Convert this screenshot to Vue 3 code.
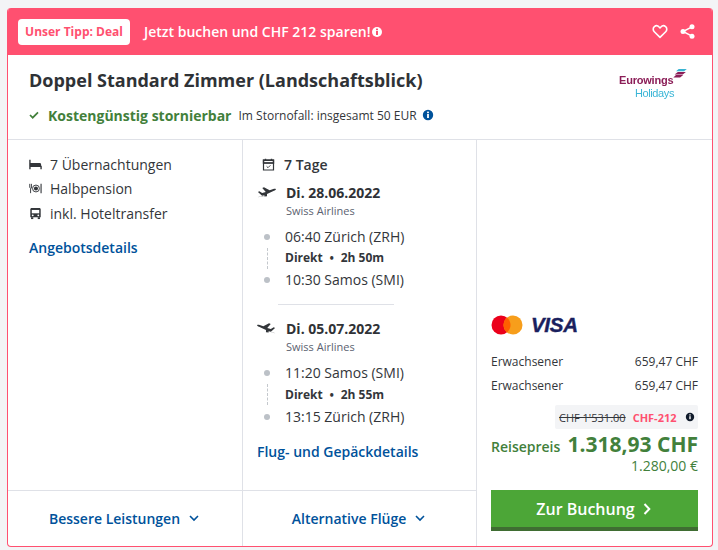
<script setup>
const legs = [
  { date: 'Di. 28.06.2022', from: '06:40 Zürich (ZRH)', dur: '2h 50m', to: '10:30 Samos (SMI)', back: false },
  { date: 'Di. 05.07.2022', from: '11:20 Samos (SMI)', dur: '2h 55m', to: '13:15 Zürich (ZRH)', back: true },
]
</script>

<template>
  <div class="page">
    <article class="card">
      <header class="banner">
        <span class="tip">Unser Tipp: Deal</span>
        <span class="save">Jetzt buchen und CHF 212 sparen!</span>
        <svg class="info-w" viewBox="0 0 12 12"><circle cx="6" cy="6" r="5" fill="#fff"/><rect x="5" y="5" width="2" height="4" fill="#ff5070"/><rect x="5" y="2.6" width="2" height="1.6" fill="#ff5070"/></svg>
        <span class="spacer"></span>
        <svg class="heart" viewBox="0 0 16 15"><path d="M8 13.4 2.3 7.7C.8 6.2.9 3.9 2.4 2.6 3.8 1.5 5.9 1.7 7.1 3L8 3.9l.9-.9c1.2-1.3 3.3-1.5 4.7-.4 1.5 1.3 1.6 3.6.1 5.1z" fill="none" stroke="#fff" stroke-width="1.6" stroke-linejoin="round"/></svg>
        <svg class="share" viewBox="0 0 15 15"><circle cx="12" cy="2.8" r="2.5" fill="#fff"/><circle cx="3" cy="7.5" r="2.5" fill="#fff"/><circle cx="12" cy="12.2" r="2.5" fill="#fff"/><path d="M12 2.8 3 7.5l9 4.7" fill="none" stroke="#fff" stroke-width="1.5"/></svg>
      </header>

      <section class="intro">
        <div class="intro-text">
          <h1>Doppel Standard Zimmer (Landschaftsblick)</h1>
          <div class="cancel">
            <svg class="check" viewBox="0 0 10 8"><path d="M1 4l2.7 2.7L9 1.3" fill="none" stroke="#42803b" stroke-width="1.7"/></svg>
            <strong>Kostengünstig stornierbar</strong>
            <span class="storno">Im Stornofall: insgesamt 50 EUR</span>
            <svg class="info-b" viewBox="0 0 12 12"><circle cx="6" cy="6" r="5.2" fill="#00529b"/><rect x="5.1" y="5" width="1.8" height="4" fill="#fff"/><rect x="5.1" y="2.6" width="1.8" height="1.6" fill="#fff"/></svg>
          </div>
        </div>
        <div class="logo">
          <svg class="wing" viewBox="0 0 16 10"><path d="M6 0h9l-3 2.500H3z" fill="#39b4d2"/><path d="M5 3.200h9l-3.500 2.800H1.500z" fill="#8b1d57"/><path d="M3 6.800h8L7.500 9.500H0z" fill="#8b1d57"/></svg>
          <div class="euro">Eurowings</div>
          <div class="holi">Holidays</div>
        </div>
      </section>

      <section class="grid">
        <div class="col col-a">
          <ul class="facts">
            <li>
              <svg viewBox="0 0 14 12"><path d="M1 1v10M1 8h12v3" fill="none" stroke="#33363a" stroke-width="1.500"/><path d="M1 4.500h10.500c.9 0 1.500.6 1.500 1.500v2H1z" fill="#33363a"/></svg>
              <span>7 Übernachtungen</span>
            </li>
            <li>
              <svg viewBox="0 0 14 12"><path d="M.8 1v3.400c0 .8.400 1.300.9 1.500V11M2.600 1v4.900" fill="none" stroke="#33363a" stroke-width="1"/><circle cx="7.500" cy="6" r="3.700" fill="none" stroke="#33363a" stroke-width="1"/><circle cx="7.500" cy="6" r="2.200" fill="#33363a"/><path d="M13 1v10" fill="none" stroke="#33363a" stroke-width="1.200"/></svg>
              <span>Halbpension</span>
            </li>
            <li>
              <svg viewBox="0 0 14 14"><path d="M3 1h8c1 0 1.600.6 1.600 1.600V11H1.400V2.600C1.400 1.600 2 1 3 1z" fill="#33363a"/><rect x="3" y="3.200" width="8" height="3.600" fill="#fff"/><circle cx="4" cy="9" r="1" fill="#fff"/><circle cx="10" cy="9" r="1" fill="#fff"/><rect x="2.200" y="11" width="2.400" height="2" fill="#33363a"/><rect x="9.400" y="11" width="2.400" height="2" fill="#33363a"/></svg>
              <span>inkl. Hoteltransfer</span>
            </li>
          </ul>
          <a class="link details">Angebotsdetails</a>
        </div>

        <div class="col col-b">
          <div class="days">
            <svg viewBox="0 0 13 13"><path d="M1.500 2.500h10v9.500h-10zM1.500 5h10" fill="none" stroke="#33363a" stroke-width="1.200"/><path d="M1.500 2h10v3h-10zM3.500.7v2M9.500.7v2" fill="none" stroke="#33363a" stroke-width="1.400"/><path d="M4.600 8.300l1.400 1.400 2.400-2.400" fill="none" stroke="#33363a" stroke-width=".9"/></svg>
            <span>7 Tage</span>
          </div>
          <div v-for="(leg, i) in legs" :key="leg.date" class="leg" :class="{ second: i === 1 }">
            <div class="leg-head">
              <svg class="plane" viewBox="0 0 18 11">
                <path v-if="!leg.back" d="M0 10.500c2.500-.6 4.700-.6 7-.8V8.600L4.800 9 .9 5.400l1.300-.5 2.700 1.600 3.400-1L5 1.600 6.600 1l5.400 2.800 3.400-1.100c1.200-.3 2.300-.3 2.500.1.200.5-.6 1.100-1.800 1.600L9.500 7.300v2.300c-3 .2-6.500.3-9.500.9z" fill="#33363a"/>
                <path v-else d="M18 10.500c-2.500-.6-4.700-.6-7-.8V8.600l2.200.4 3.900-3.600-1.300-.5-2.700 1.600-3.400-1L13 1.600 11.400 1 6 3.800 2.600 2.700C1.400 2.400.3 2.400.1 2.800c-.2.5.6 1.100 1.800 1.600l6.600 2.900v2.300c3 .2 6.500.3 9.500.9z" fill="#33363a"/>
              </svg>
              <div>
                <div class="date">{{ leg.date }}</div>
                <div class="airline">Swiss Airlines</div>
              </div>
            </div>
            <div class="times">
              <div class="time"><i class="dot"></i>{{ leg.from }}</div>
              <div class="direct"><i class="dash"></i>Direkt<b>•</b>{{ leg.dur }}</div>
              <div class="time"><i class="dot"></i>{{ leg.to }}</div>
            </div>
            <hr v-if="i === 0" class="sep" />
          </div>
          <a class="link flight">Flug- und Gepäckdetails</a>
        </div>

        <aside class="col col-c">
          <div class="pay">
            <svg class="mc" viewBox="0 0 32 20"><circle cx="10" cy="10" r="9.500" fill="#eb001b"/><circle cx="22" cy="10" r="9.500" fill="#f79e1b"/><path d="M16 2.600a9.500 9.500 0 0 1 0 14.800 9.500 9.500 0 0 1 0-14.800z" fill="#ff5f00"/></svg>
            <span class="visa">VISA</span>
          </div>
          <div class="row"><span>Erwachsener</span><span>659,47 CHF</span></div>
          <div class="row second-row"><span>Erwachsener</span><span>659,47 CHF</span></div>
          <div class="discount">
            <s>CHF 1'531.00</s>
            <b>CHF-212</b>
            <svg viewBox="0 0 12 12"><circle cx="6" cy="6" r="4.200" fill="#101b2b"/><rect x="5.300" y="5.200" width="1.400" height="3" fill="#fff"/><rect x="5.300" y="3.300" width="1.400" height="1.200" fill="#fff"/></svg>
          </div>
          <div class="total"><span>Reisepreis</span><strong>1.318,93 CHF</strong></div>
          <div class="euro-price">1.280,00 €</div>
          <button class="book">Zur Buchung
            <svg viewBox="0 0 8 12"><path d="M1.500 1l4.800 5-4.800 5" fill="none" stroke="#fff" stroke-width="2"/></svg>
          </button>
        </aside>

        <div class="foot foot-a">
          <a>Bessere Leistungen</a>
          <svg viewBox="0 0 10 7"><path d="M1 1l4 4 4-4" fill="none" stroke="#00529b" stroke-width="1.600"/></svg>
        </div>
        <div class="foot foot-b">
          <a>Alternative Flüge</a>
          <svg viewBox="0 0 10 7"><path d="M1 1l4 4 4-4" fill="none" stroke="#00529b" stroke-width="1.600"/></svg>
        </div>
      </section>
    </article>
  </div>
</template>

<style>
html, body { margin: 0; background: #f3f4f6; }
</style>

<style scoped>
.page { padding: 8px 5px 0 7px; font-family: "Open Sans", sans-serif; color: #33363a; }
.card { box-sizing: border-box; height: 539px; background: #fff; border: 1px solid #ff5070; border-top: 0; border-radius: 4px; display: flex; flex-direction: column; overflow: hidden; }

.banner { flex: none; height: 47px; margin: 0 -1px; background: #ff5070; display: flex; align-items: center; padding: 0 18px 0 11px; box-sizing: border-box; color: #fff; }
.tip { background: #fff; color: #ff5070; border-radius: 4px; font-size: 12px; font-weight: 700; height: 26px; line-height: 26px; width: 112px; text-align: center; }
.save { margin-left: 14px; font-size: 14px; font-weight: 600; }
.info-w { width: 12px; height: 12px; }
.spacer { flex: 1; }
.heart { width: 16px; height: 15px; margin-right: 12px; }
.share { width: 15px; height: 15px; }

.intro { flex: none; height: 85px; box-sizing: border-box; border-bottom: 1px solid #dfe1e7; display: flex; justify-content: space-between; padding: 13px 24px 0 21px; }
h1 { margin: 0; font-size: 18px; line-height: 24px; font-weight: 700; color: #2f3236; }
.cancel { display: flex; align-items: center; margin-top: 11px; height: 24px; }
.check { width: 10px; height: 8px; margin-right: 9px; }
.cancel strong { color: #42803b; font-size: 14px; font-weight: 700; }
.storno { font-size: 12px; margin-left: 7px; }
.info-b { width: 12px; height: 12px; margin-left: 5px; }

.logo { position: relative; width: 70px; margin-top: -13px; padding-top: 19px; font-family: "Liberation Sans", sans-serif; filter: blur(0.3px); }
.wing { position: absolute; right: 0; top: 14px; width: 15px; height: 9px; }
.euro { color: #8b1d57; font-size: 11px; line-height: 12px; font-weight: 700; letter-spacing: -0.2px; margin-left: 1px; }
.holi { color: #3ab5d6; font-size: 11px; line-height: 12px; letter-spacing: -0.4px; margin-top: 1px; margin-left: 17px; }

.grid { flex: 1; display: grid; grid-template-columns: 235px 234px 1fr; grid-template-rows: 350px 1fr; }
.col-a { border-right: 1px solid #dfe1e7; padding: 12px 0 0 21px; }
.col-b { border-right: 1px solid #dfe1e7; padding: 14px 0 0 14px; }
.col-c { grid-column: 3; grid-row: 1 / 3; padding: 0 14px; display: flex; flex-direction: column; justify-content: flex-end; }

.facts { list-style: none; margin: 0; padding: 0; font-size: 14px; }
.facts li { display: flex; align-items: center; height: 24.500px; }
.facts svg { width: 13px; height: 13px; margin-right: 8px; flex: none; }
.link { color: #00529b; font-weight: 600; font-size: 14px; display: block; }
.details { margin-top: 12px; line-height: 20px; }

.days { display: flex; align-items: center; font-size: 14px; font-weight: 600; height: 20px; margin-left: 5px; }
.days svg { width: 13px; height: 13px; margin-right: 9px; }
.leg { margin-top: 9px; }
.leg.second { margin-top: 14px; }
.leg-head { display: flex; align-items: flex-start; }
.plane { width: 19px; height: 12px; margin: 3px 10px 0 0; flex: none; }
.date { font-size: 14px; font-weight: 700; line-height: 19px; color: #2f3236; }
.airline { font-size: 11px; line-height: 16px; margin-top: 1px; color: #5b6270; }
.times { margin-top: 8px; font-size: 14px; margin-left: 5px; }
.time { position: relative; line-height: 20px; padding-left: 23px; }
.dot { position: absolute; left: 2px; top: 7px; width: 6px; height: 6px; border-radius: 50%; background: #bcc1c7; }
.direct { position: relative; font-size: 12px; font-weight: 700; line-height: 22.500px; padding-left: 23px; }
.second .direct { line-height: 24.500px; }
.direct b { font-size: 10px; margin: 0 7px; }
.dash { position: absolute; left: 4.500px; top: 1px; height: 21px; border-left: 1px dashed #c4c8cd; }
.sep { border: 0; border-top: 1px solid #dfe1e7; margin: 14px 0 0 21px; width: 116px; }
.flight { margin: 15px 0 0; line-height: 20px; }

.pay { display: flex; align-items: center; height: 20px; margin-bottom: 19px; }
.mc { width: 32px; height: 20px; }
.visa { margin-left: 8px; color: #1a1f5e; font-family: "Liberation Sans", sans-serif; font-style: italic; font-weight: 700; font-size: 20.500px; letter-spacing: -0.3px; -webkit-text-stroke: 0.4px #1a1f5e; }
.row { display: flex; justify-content: space-between; font-size: 12px; line-height: 16px; margin-bottom: 8px; }
.second-row { margin-bottom: 11px; }
.discount { align-self: flex-end; width: 143px; box-sizing: border-box; height: 24px; background: #f3f4f6; border-radius: 2px; display: flex; align-items: center; padding: 0 4px; font-size: 11px; white-space: nowrap; }
.discount s { margin-right: 7px; }
.discount b { color: #ff5070; }
.discount svg { width: 12px; height: 12px; margin-left: 7px; flex: none; }
.total { display: flex; justify-content: space-between; align-items: baseline; color: #42803b; margin-top: 5px; line-height: 20px; }
.total span { font-size: 14px; font-weight: 600; }
.total strong { font-size: 21px; font-weight: 700; }
.euro-price { text-align: right; color: #42803b; font-size: 14px; line-height: 18px; font-weight: 400; }
.book { margin: 15px 0; height: 41px; width: 100%; border: 0; border-bottom: 4px solid #3f6d32; background: #4ca637; color: #fff; font: 600 16px "Open Sans", sans-serif; display: flex; align-items: center; justify-content: center; gap: 8px; padding: 0 2px 0 0; }
.book svg { width: 8px; height: 12px; }

.foot { border-top: 1px solid #dfe1e7; border-right: 1px solid #dfe1e7; display: flex; align-items: center; justify-content: center; color: #00529b; font-size: 14px; font-weight: 600; gap: 9px; padding-right: 2px; }
.foot svg { width: 10px; height: 7px; }
</style>
